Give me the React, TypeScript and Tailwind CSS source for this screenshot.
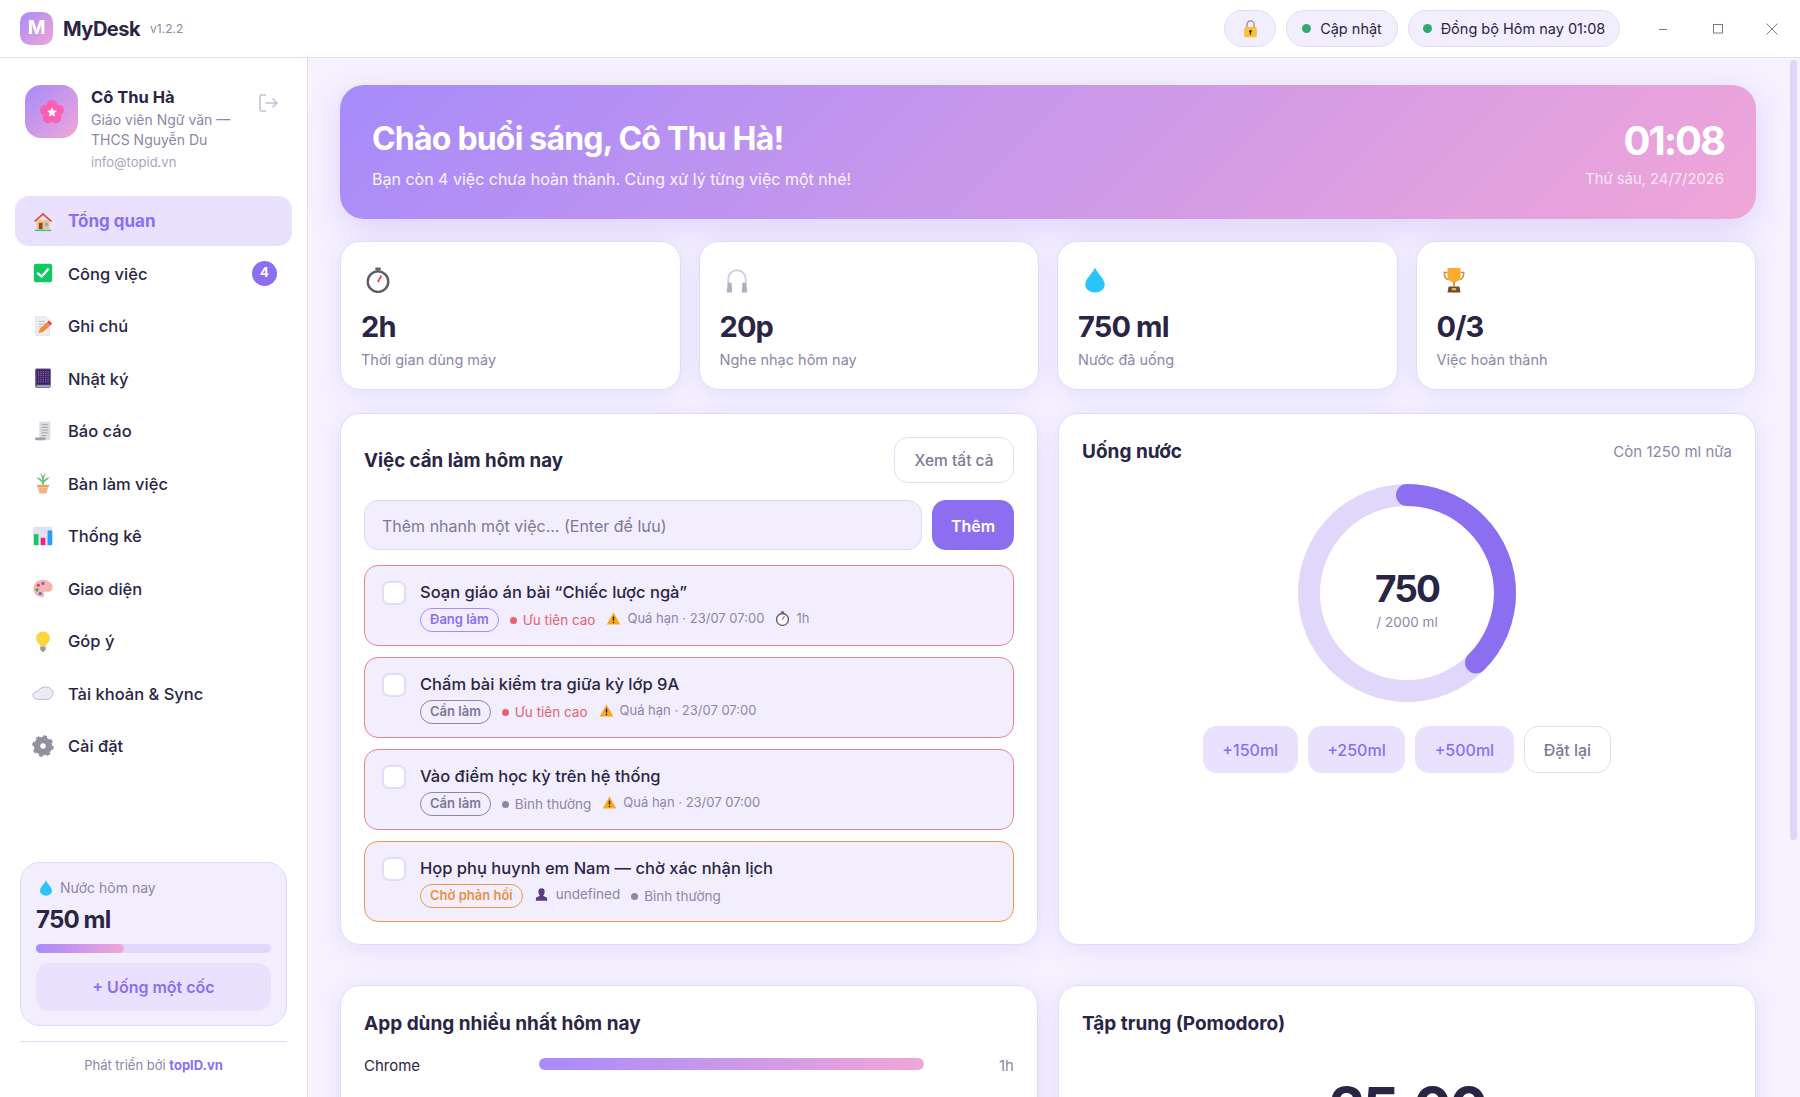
import type { ReactNode } from "react";

const ic = (children: ReactNode, size = 22) => (
  <svg width={size} height={size} viewBox="0 0 24 24" className="shrink-0">
    {children}
  </svg>
);

const HomeIcon = () =>
  ic(
    <>
      <path d="M5 11h14v10H5z" fill="#f3c27e" />
      <path d="M2 12 12 3l10 9-1.5 1.2L12 5.6 3.5 13.2z" fill="#e0533d" />
      <path d="M7.5 14h4v7h-4z" fill="#8a4b2a" />
      <path d="M14 14h3.5v3.5H14z" fill="#6fb7e8" />
      <path d="M3 21.5h18V23H3z" fill="#31c48d" />
    </>,
  );
const CheckIcon = () =>
  ic(
    <>
      <rect x="2" y="2" width="20" height="20" rx="2.5" fill="#0fc864" />
      <path d="m6.5 12.5 4 3.5 7-8" fill="none" stroke="#fff" strokeWidth="2.6" strokeLinecap="round" />
    </>,
  );
const NoteIcon = () =>
  ic(
    <>
      <path d="M4 2h11l4 4v16H4z" fill="#f1edf6" stroke="#d9d4e2" strokeWidth=".8" />
      <path d="M7 7h7M7 10h9M7 13h5" stroke="#b9b3c6" strokeWidth="1" />
      <path d="m7 20 1.5-5 9-8 3.5 3.5-9 8z" fill="#f58a2e" />
      <path d="m18.5 6 3.5 3.5-1.5 1.5L17 7.5z" fill="#e8315b" />
    </>,
  );
const BookIcon = () =>
  ic(
    <>
      <rect x="3.5" y="1.5" width="17" height="21" rx="1.5" fill="#5b4a80" />
      <rect x="5" y="3" width="14.5" height="16" fill="#33245a" />
      <path d="M6.500 5h12M6.500 9.500h12M6.500 14h12" stroke="#d04aa8" strokeWidth="1.300" strokeDasharray="1.300 1.300" />
      <path d="M6.500 7.200h12M6.500 11.700h12M6.500 16.300h12" stroke="#6a7be8" strokeWidth="1.300" strokeDasharray="1.300 1.300" />
      <path d="M5 20.800h15" stroke="#d3cede" strokeWidth="1.400" />
    </>,
  );
const ScrollIcon = () =>
  ic(
    <>
      <path d="M8 2h12v17a3 3 0 0 1-3 3H6l2-3z" fill="#dedbe2" />
      <path d="M10.5 5h7M10.5 8h7M10.5 11h7M10.5 14h7M10.5 17h5" stroke="#a7a4ad" strokeWidth="1" />
      <path d="M3.5 19h11.5v1a2 2 0 0 1-2 2H5a2 2 0 0 1-1.5-3z" fill="#a2a0a7" />
    </>,
  );
const PlantIcon = () =>
  ic(
    <>
      <path d="M12 14V4" stroke="#4aa564" strokeWidth="1.6" />
      <path d="M12 12 4.500 6c3.500 0 6.500 2 7.500 6zM12 12l7.500-6c-3.500 0-6.500 2-7.500 6zM12 9 9 1c2 1 3 4.500 3 8zM12 9l3-8c-2 1-3 4.500-3 8z" fill="#5dbb72" />
      <path d="M5.500 14h13v2.500h-13z" fill="#e9a468" />
      <path d="M6.500 16.500h11L16 23.500H8z" fill="#f3b27e" />
    </>,
  );
const ChartIcon = () =>
  ic(
    <>
      <rect x="1.5" y="2" width="21" height="20" rx="2" fill="#e4e0ee" />
      <rect x="2" y="10" width="5" height="12" fill="#0fc864" />
      <rect x="9.5" y="14" width="5" height="8" fill="#f0218d" />
      <rect x="17" y="6" width="5" height="16" fill="#2a9df4" />
    </>,
  );
const PaletteIcon = () =>
  ic(
    <>
      <path d="M12 3C6 3 1.500 7 1.500 12.500S6 22 11 22c2.500 0 2.500-2 2-3.500s.5-3 2.500-2.500 6.500.5 7-4C23 7 18 3 12 3z" fill="#f6b5ac" />
      <circle cx="7" cy="9" r="1.700" fill="#e23b7d" />
      <circle cx="5.500" cy="14" r="1.700" fill="#19b56f" />
      <circle cx="12" cy="7" r="1.700" fill="#9a4fd8" />
      <circle cx="9" cy="18" r="1.700" fill="#3c6fe0" />
    </>,
  );
const BulbIcon = () =>
  ic(
    <>
      <path d="M12 1.500a7.500 7.500 0 0 0-4.500 13.500c1 1 1.500 2 1.500 3h6c0-1 .5-2 1.500-3A7.500 7.500 0 0 0 12 1.500z" fill="#fcd53f" />
      <rect x="9" y="18" width="6" height="4" rx="1" fill="#9b98a1" />
      <rect x="10.500" y="22" width="3" height="1.500" fill="#77747d" />
    </>,
  );
const CloudIcon = () =>
  ic(
    <path d="M6.500 19C3.500 19 1 17 1 14.500S3.500 10 6.500 10C8 7 11 5.500 15 5.500c4.500 0 8 3 8 6.500 0 4-3 7-7 7z" fill="#eeeaf6" stroke="#b9b4c6" strokeWidth="1" />,
  );
const GearIcon = () =>
  ic(
    <>
      <circle cx="12" cy="12" r="6.500" fill="none" stroke="#938ea0" strokeWidth="7" />
      <circle cx="12" cy="12" r="10" fill="none" stroke="#938ea0" strokeWidth="3.500" strokeDasharray="3.900 3.950" />
    </>,
  );
const WatchIcon = ({ size = 26 }: { size?: number }) =>
  ic(
    <>
      <rect x="9.500" y="0.500" width="5" height="2.500" fill="#66636b" />
      <rect x="11" y="2.500" width="2" height="2" fill="#66636b" />
      <circle cx="12" cy="13.500" r="9.500" fill="#fff" stroke="#5f5c66" strokeWidth="2.200" />
      <path d="m12 14 3-6" stroke="#e53935" strokeWidth="1.600" />
    </>,
    size,
  );
const PhonesIcon = () =>
  ic(
    <>
      <path d="M4 16v-5a8 8 0 0 1 16 0v5" fill="none" stroke="#d3cedc" strokeWidth="1.800" />
      <path d="M3.500 14.500h3.500l.5 9H2.500z" fill="#b3adc2" />
      <path d="M17 14.500h3.500l1 9h-5z" fill="#b3adc2" />
    </>,
    26,
  );
const DropIcon = ({ size = 26 }: { size?: number }) =>
  ic(<path d="M12 .5C10 6 3 10.500 3 16.500a9 7 0 0 0 18 0C21 10.500 14 6 12 .5z" fill="#29c4fb" />, size);
const TrophyIcon = () =>
  ic(
    <>
      <path d="M6 5H3c0 4 1.500 6 4 6.500M18 5h3c0 4-1.500 6-4 6.500" fill="none" stroke="#d18f3e" strokeWidth="1.400" />
      <path d="M6 1h12v7c0 4-3 6-6 6s-6-2-6-6z" fill="#fdab2d" />
      <path d="M11 13.500h2v4h-2z" fill="#e6952a" />
      <path d="M7 18h10l1 5.500H6z" fill="#6d4a35" />
      <rect x="10" y="19.500" width="4" height="2" fill="#f3b53f" />
    </>,
    26,
  );
const WarnIcon = () =>
  ic(
    <>
      <path d="M12 2.500 23 21.500H1z" fill="#fba81f" />
      <path d="M12 9v6.500" stroke="#1e1b22" strokeWidth="2.200" />
      <circle cx="12" cy="18.300" r="1.300" fill="#1e1b22" />
    </>,
    15,
  );
const PersonIcon = () =>
  ic(
    <path d="M12 2a5 5 0 0 1 5 5c0 3-1.500 6-2.500 7l6.500 3v5H3v-5l6.500-3C8.500 13 7 10 7 7a5 5 0 0 1 5-5z" fill="#5b3d80" />,
    15,
  );
const LockIcon = () =>
  ic(
    <>
      <path d="M7.500 11V7a4.500 4.500 0 0 1 9 0v4" fill="none" stroke="#a9a6b0" strokeWidth="2.200" />
      <rect x="4" y="10" width="16" height="13" rx="2" fill="#fcbf38" />
      <circle cx="12" cy="15.500" r="1.700" fill="#3d3320" />
      <rect x="11.200" y="16" width="1.600" height="4" fill="#3d3320" />
    </>,
    19,
  );
const FlowerIcon = () => (
  <svg width="26" height="26" viewBox="0 0 24 24">
    <circle cx="12" cy="5.800" r="5" fill="#fb5fb2" />
    <circle cx="18" cy="10.200" r="5" fill="#fb5fb2" />
    <circle cx="15.700" cy="17.300" r="5" fill="#fb5fb2" />
    <circle cx="8.300" cy="17.300" r="5" fill="#fb5fb2" />
    <circle cx="6" cy="10.200" r="5" fill="#fb5fb2" />
    <path d="m12 7.500 1.300 3.100 3.300.3-2.500 2.200.8 3.300-2.900-1.700-2.900 1.700.8-3.300-2.500-2.200 3.300-.3z" fill="#fff" />
  </svg>
);

const nav = [
  { label: "Tổng quan", icon: <HomeIcon />, active: true },
  { label: "Công việc", icon: <CheckIcon />, badge: 4 },
  { label: "Ghi chú", icon: <NoteIcon /> },
  { label: "Nhật ký", icon: <BookIcon /> },
  { label: "Báo cáo", icon: <ScrollIcon /> },
  { label: "Bàn làm việc", icon: <PlantIcon /> },
  { label: "Thống kê", icon: <ChartIcon /> },
  { label: "Giao diện", icon: <PaletteIcon /> },
  { label: "Góp ý", icon: <BulbIcon /> },
  { label: "Tài khoản & Sync", icon: <CloudIcon /> },
  { label: "Cài đặt", icon: <GearIcon /> },
];

const stats = [
  { icon: <WatchIcon />, value: "2h", label: "Thời gian dùng máy" },
  { icon: <PhonesIcon />, value: "20p", label: "Nghe nhạc hôm nay" },
  { icon: <DropIcon />, value: "750 ml", label: "Nước đã uống" },
  { icon: <TrophyIcon />, value: "0/3", label: "Việc hoàn thành" },
];

function Pill({ text, className }: { text: string; className: string }) {
  return (
    <span className={`flex h-6 items-center rounded-full border-[1.5px] px-[9px] text-[13px] font-semibold ${className}`}>
      {text}
    </span>
  );
}

function Priority({ text, high }: { text: string; high?: boolean }) {
  return (
    <span className={`flex items-center gap-[6px] text-[13.5px] ${high ? "text-[#e5616f]" : "text-[#8c86a8]"}`}>
      <span className={`size-[7px] rounded-full ${high ? "bg-[#e5616f]" : "bg-[#8c86a8]"}`} />
      {text}
    </span>
  );
}

function Overdue() {
  return (
    <span className="mb-[3px] flex items-center gap-[6px] text-[13px] text-[#8c86a8]">
      <WarnIcon />
      Quá hạn · 23/07 07:00
    </span>
  );
}

function Task({ title, border, children }: { title: string; border: string; children: ReactNode }) {
  return (
    <div className={`flex h-[81px] items-start gap-[14px] rounded-[14px] border-[1.5px] bg-[#f3eefe] pl-[17px] pt-[15px] ${border}`}>
      <span className="size-6 shrink-0 rounded-[7px] border-2 border-[#e3dbfd] bg-white" />
      <div className="flex flex-col gap-[5px]">
        <div className="text-[16.5px] leading-[22px] font-medium text-[#2a2545]">{title}</div>
        <div className="flex items-center gap-[11px]">{children}</div>
      </div>
    </div>
  );
}

export default function App() {
  return (
    <div className="flex h-screen flex-col overflow-hidden bg-white font-[family-name:Inter,sans-serif] text-[#2a2545]">
      <header className="flex h-[58px] shrink-0 items-center border-b border-[#e3dcf7] bg-white pl-5 pr-[22px]">
        <div className="flex size-[33px] items-center justify-center rounded-[10px] bg-[linear-gradient(135deg,#a78bfa,#f0a6d8)] text-[19px] font-bold text-white">
          M
        </div>
        <span className="ml-[10px] text-[20px] font-bold tracking-[-0.025em]">MyDesk</span>
        <span className="ml-[10px] mt-[1px] text-[12px] text-[#8c86a8]">v1.2.2</span>
        <div className="ml-auto flex items-center gap-[10px]">
          <div className="flex h-[37px] w-[52px] items-center justify-center rounded-full border border-[#e3dcf7] bg-[#f3eefe]">
            <LockIcon />
          </div>
          <div className="flex h-[37px] w-[112px] items-center justify-center gap-[9px] rounded-full border border-[#e3dcf7] bg-[#f3eefe] text-[14.5px]">
            <span className="size-[9px] rounded-full bg-[#2fab72]" />
            Cập nhật
          </div>
          <div className="flex h-[37px] w-[212px] items-center justify-center gap-[9px] rounded-full border border-[#e3dcf7] bg-[#f3eefe] text-[14.5px]">
            <span className="size-[9px] rounded-full bg-[#2fab72]" />
            Đồng bộ Hôm nay 01:08
          </div>
          <div className="ml-[27px] flex w-[121px] items-center justify-between text-[#7d7896]">
            <svg width="12" height="12" viewBox="0 0 12 12"><path d="M2 6.500h8" stroke="currentColor" /></svg>
            <svg width="12" height="12" viewBox="0 0 12 12"><rect x="1.500" y="1.500" width="9" height="8.500" fill="none" stroke="currentColor" /></svg>
            <svg width="12" height="12" viewBox="0 0 12 12"><path d="m.5.5 11 11m0-11-11 11" stroke="currentColor" /></svg>
          </div>
        </div>
      </header>

      <div className="flex min-h-0 flex-1">
        <aside className="flex w-[308px] shrink-0 flex-col border-r border-[#e3dcf7] bg-white px-[15px] pb-[22px] pt-[27px]">
          <div className="flex items-start px-[10px]">
            <div className="flex size-[53px] shrink-0 items-center justify-center rounded-2xl bg-[linear-gradient(135deg,#a78bfa,#f0a6d8)]">
              <FlowerIcon />
            </div>
            <div className="ml-[13px] flex-1 pt-[1px]">
              <div className="text-[16.5px] leading-[22px] font-bold">Cô Thu Hà</div>
              <div className="mt-[2px] w-[150px] text-[14px] leading-5 text-[#8c86a8]">Giáo viên Ngữ văn — THCS Nguyễn Du</div>
              <div className="mt-[2px] text-[13px] leading-5 text-[#aaa5c0]">info@topid.vn</div>
            </div>
            <svg width="20" height="20" viewBox="0 0 20 20" className="mr-[4px] mt-[8px]" fill="none" stroke="#c5c0d4" strokeWidth="1.500">
              <path d="M8 2H3.500A1.500 1.500 0 0 0 2 3.500v13A1.500 1.500 0 0 0 3.500 18H8M7.500 10H19M14.500 5.500 19 10l-4.500 4.500" />
            </svg>
          </div>

          <nav className="mt-[23.500px] flex flex-col gap-[2.500px]">
            {nav.map((item) => (
              <div
                key={item.label}
                className={`flex h-[50px] items-center gap-[14px] rounded-[14px] pl-[17px] pr-[15px] ${
                  item.active ? "bg-[#e9e1fd] text-[17px] font-bold text-[#8b6ff0]" : "text-[16.5px] font-medium"
                }`}
              >
                {item.icon}
                <span className="pt-[2px]">{item.label}</span>
                {item.badge && (
                  <span className="ml-auto flex size-[25px] items-center justify-center rounded-full bg-[#8b6ff0] text-[13px] font-bold text-white">
                    {item.badge}
                  </span>
                )}
              </div>
            ))}
          </nav>

          <div className="mt-auto mx-[5px] rounded-[20px] border border-[#e0d7fb] bg-[#f3eefe] px-[15px] pb-[14px] pt-[15px]">
            <div className="flex items-center gap-[6px] pl-[2px] text-[14px] leading-5 text-[#8c86a8]">
              <DropIcon size={16} />
              Nước hôm nay
            </div>
            <div className="mt-[6px] text-[24px] leading-8 font-bold tracking-[-0.035em]">750 ml</div>
            <div className="mt-[8px] h-[9px] rounded-full bg-[#e0d7fb]">
              <div className="h-full w-[88px] rounded-full bg-[linear-gradient(90deg,#a78bfa,#f0a6d8)]" />
            </div>
            <div className="mt-[10px] flex h-[48px] items-center justify-center rounded-[14px] bg-[#e9e1fd] text-[16px] font-semibold text-[#8b6ff0]">
              + Uống một cốc
            </div>
          </div>
          <div className="mx-[5px] mt-[15px] border-t border-[#e3dcf7] pt-[13px] text-center text-[13px] leading-5 text-[#8c86a8]">
            Phát triển bởi <span className="font-bold text-[#8b6ff0]">topID.vn</span>
          </div>
        </aside>

        <main className="relative min-w-0 flex-1 overflow-hidden bg-[#f6f2ff] pl-[32px] pr-[44px] pt-[27px]">
          <div className="flex h-[134px] items-center justify-between rounded-3xl bg-[linear-gradient(135deg,#a78bfa,#f0a6d8)] px-8 text-white shadow-[0_8px_32px_rgba(139,111,240,0.25)]">
            <div className="pt-[5px]">
              <div className="text-[32px] leading-10 font-bold tracking-[-0.025em]">Chào buổi sáng, Cô Thu Hà!</div>
              <div className="mt-[8px] text-[16px] leading-6 text-white/90">Bạn còn 4 việc chưa hoàn thành. Cùng xử lý từng việc một nhé!</div>
            </div>
            <div className="text-right">
              <div className="text-[40px] leading-[50px] font-bold tracking-[-0.05em]">01:08</div>
              <div className="mt-[3px] text-[14.8px] leading-5 text-white/75">Thứ sáu, 24/7/2026</div>
            </div>
          </div>

          <div className="mt-[22px] grid grid-cols-4 gap-[18px]">
            {stats.map((s) => (
              <div key={s.label} className="flex h-[149px] flex-col rounded-[20px] border border-[#e3dcf7] bg-white px-[20px] pt-[25px] shadow-[0_4px_24px_rgba(139,111,240,0.16)]">
                <div className="ml-[4px]">{s.icon}</div>
                <div className="mt-[16px] text-[29px] leading-9 font-bold tracking-[-0.03em]">{s.value}</div>
                <div className="mt-[5px] text-[14.5px] leading-5 text-[#8c86a8]">{s.label}</div>
              </div>
            ))}
          </div>

          <div className="mt-[23px] grid grid-cols-2 gap-[20px]">
            <section className="h-[532px] rounded-[20px] border border-[#e3dcf7] bg-white px-[23px] pt-[23px] shadow-[0_4px_24px_rgba(139,111,240,0.16)]">
              <div className="flex items-center justify-between">
                <h2 className="mt-[3px] text-[18.7px] font-bold">Việc cần làm hôm nay</h2>
                <button className="h-[46px] w-[120px] rounded-[14px] border-[1.5px] border-[#e3dcf7] pt-[2px] text-[15.5px] font-medium text-[#7d7896]">Xem tất cả</button>
              </div>
              <div className="mt-[17px] flex gap-[10px]">
                <div className="flex h-[50px] flex-1 items-center rounded-[14px] border border-[#e0d7fb] bg-[#f3eefe] px-[17px] pt-[2px] text-[16px] text-[#7d7896]">
                  Thêm nhanh một việc... (Enter để lưu)
                </div>
                <button className="h-[50px] w-[82px] rounded-[14px] bg-[#8b6ff0] pt-[2px] text-[16px] font-semibold text-white">Thêm</button>
              </div>
              <div className="mt-[15px] flex flex-col gap-[11px]">
                <Task title="Soạn giáo án bài “Chiếc lược ngà”" border="border-[#ea8090]">
                  <Pill text="Đang làm" className="border-[#a78bfa] text-[#8b6ff0]" />
                  <Priority text="Ưu tiên cao" high />
                  <Overdue />
                  <span className="mb-[3px] flex items-center gap-[6px] text-[13px] text-[#8c86a8]">
                    <WatchIcon size={15} />
                    1h
                  </span>
                </Task>
                <Task title="Chấm bài kiểm tra giữa kỳ lớp 9A" border="border-[#ea8090]">
                  <Pill text="Cần làm" className="border-[#8c86a8] text-[#7d7896]" />
                  <Priority text="Ưu tiên cao" high />
                  <Overdue />
                </Task>
                <Task title="Vào điểm học kỳ trên hệ thống" border="border-[#ea8090]">
                  <Pill text="Cần làm" className="border-[#8c86a8] text-[#7d7896]" />
                  <Priority text="Bình thường" />
                  <Overdue />
                </Task>
                <Task title="Họp phụ huynh em Nam — chờ xác nhận lịch" border="border-[#e99a4e]">
                  <Pill text="Chờ phản hồi" className="border-[#e99a4e] text-[#e8923f]" />
                  <span className="mb-[3px] flex items-center gap-[7px] text-[13.5px] text-[#8c86a8]">
                    <PersonIcon />
                    undefined
                  </span>
                  <Priority text="Bình thường" />
                </Task>
              </div>
            </section>

            <section className="flex h-[532px] flex-col items-center rounded-[20px] border border-[#e3dcf7] bg-white px-[23px] pt-[24px] shadow-[0_4px_24px_rgba(139,111,240,0.16)]">
              <div className="flex w-full items-center justify-between">
                <h2 className="text-[19px] font-bold">Uống nước</h2>
                <span className="text-[15px] text-[#8c86a8]">Còn 1250 ml nữa</span>
              </div>
              <div className="relative mt-[17.500px] size-[218px]">
                <svg width="218" height="218" viewBox="0 0 218 218" className="-rotate-90">
                  <circle cx="109" cy="109" r="98" fill="none" stroke="#e0d7fb" strokeWidth="22" />
                  <circle cx="109" cy="109" r="98" fill="none" stroke="#8b6ff0" strokeWidth="22" strokeLinecap="round" strokeDasharray="230.9 615.8" />
                </svg>
                <div className="absolute inset-0 flex flex-col items-center justify-center pt-[11px]">
                  <div className="text-[37px] leading-[46px] font-bold tracking-[-0.05em]">750</div>
                  <div className="text-[13.5px] leading-5 text-[#8c86a8]">/ 2000 ml</div>
                </div>
              </div>
              <div className="mt-[24px] flex gap-[10px]">
                {["+150ml", "+250ml", "+500ml"].map((t) => (
                  <button key={t} className="h-[47px] rounded-[14px] bg-[#e9e1fd] px-[19.500px] text-[16px] font-medium text-[#8b6ff0]">{t}</button>
                ))}
                <button className="h-[47px] rounded-[14px] border-[1.5px] border-[#e3dcf7] px-[19px] text-[16px] font-medium text-[#7d7896]">Đặt lại</button>
              </div>
            </section>
          </div>

          <div className="mt-[40px] grid grid-cols-2 gap-[20px]">
            <section className="h-[300px] rounded-[20px] border border-[#e3dcf7] bg-white px-[23px] pt-[24px] shadow-[0_4px_24px_rgba(139,111,240,0.16)]">
              <h2 className="text-[19px] font-bold">App dùng nhiều nhất hôm nay</h2>
              <div className="mt-[16px] flex items-center text-[15px]">
                <span className="w-[175px]">Chrome</span>
                <div className="mb-[3px] h-3 w-[385px] rounded-full bg-[linear-gradient(90deg,#a78bfa,#f0a6d8)]" />
                <span className="ml-auto text-[15px] text-[#8c86a8]">1h</span>
              </div>
            </section>
            <section className="h-[300px] rounded-[20px] border border-[#e3dcf7] bg-white px-[23px] pt-[24px] shadow-[0_4px_24px_rgba(139,111,240,0.16)]">
              <h2 className="text-[19px] font-bold">Tập trung (Pomodoro)</h2>
              <div className="mt-[34px] text-center text-[58px] leading-[70px] font-bold tracking-[-0.05em]">25:00</div>
            </section>
          </div>

          <div className="absolute right-[3px] top-[2px] h-[780px] w-[7px] rounded-full bg-[#dfd7fa]" />
        </main>
      </div>
    </div>
  );
}
